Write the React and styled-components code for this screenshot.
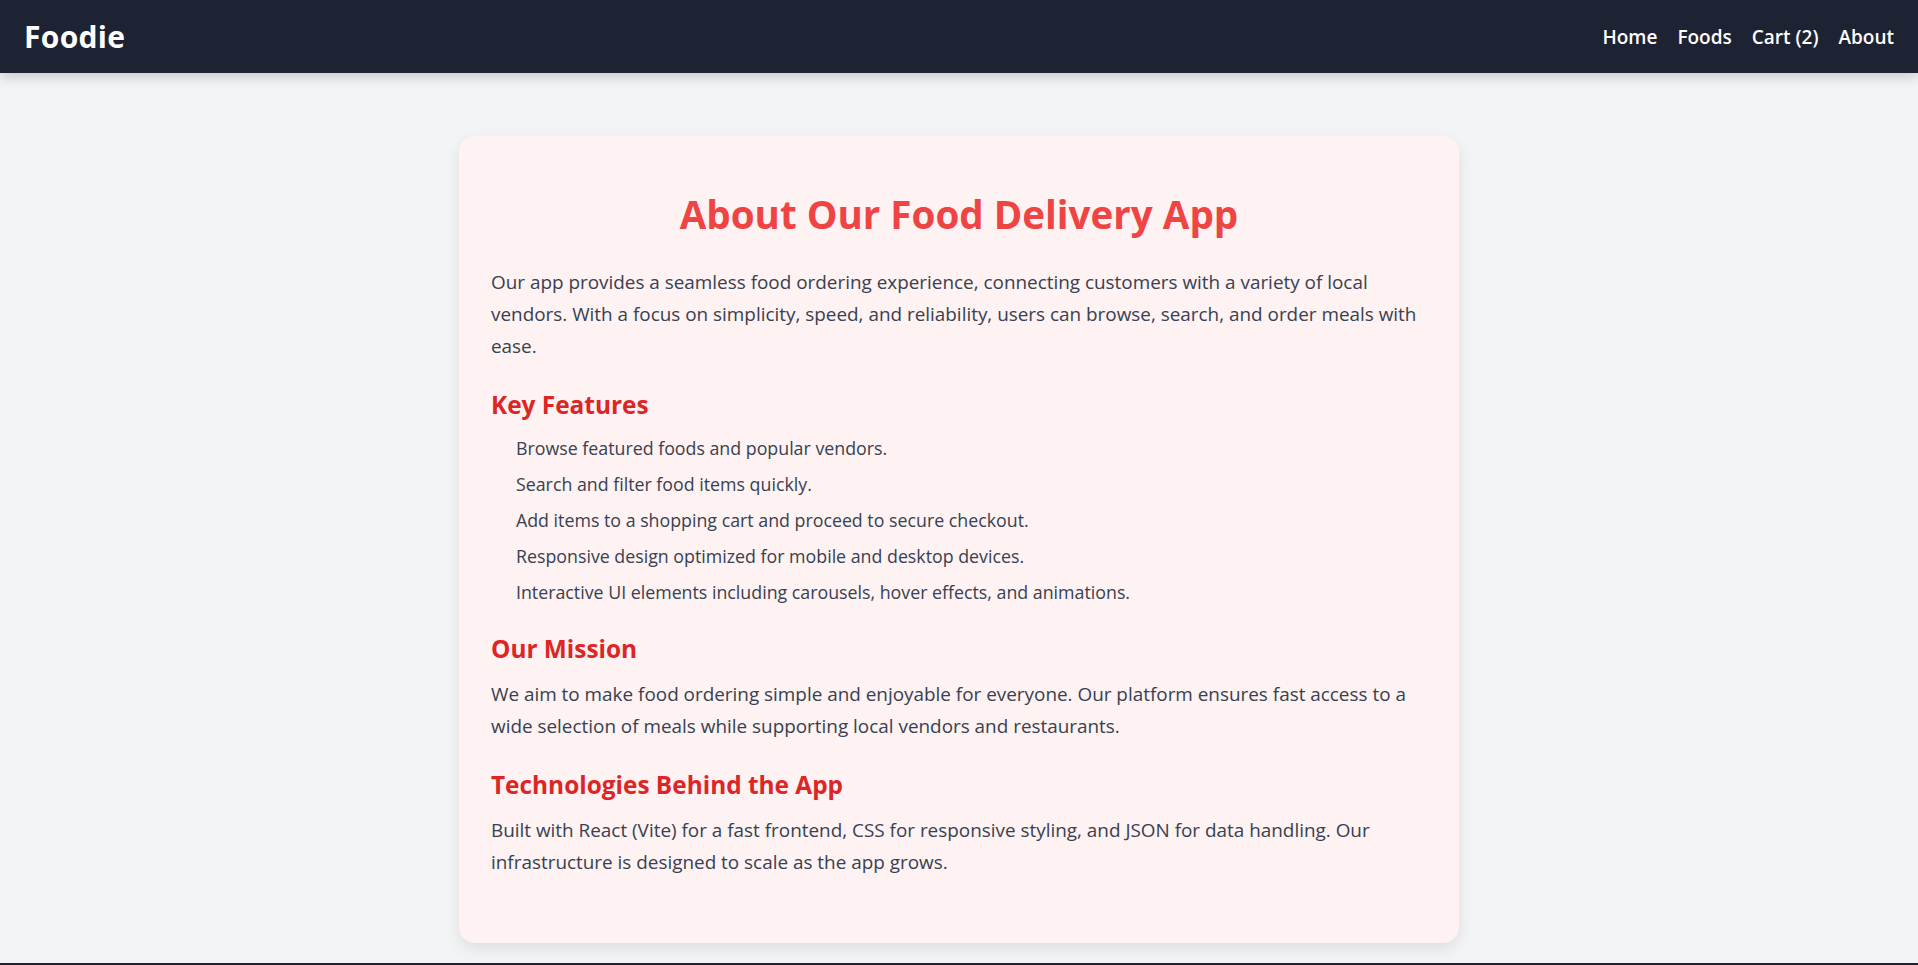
import React from "react";
import styled, { createGlobalStyle } from "styled-components";

const GlobalStyle = createGlobalStyle`
  * {
    box-sizing: border-box;
  }
  body {
    margin: 0;
    background: #f3f4f6;
    font-family: "Open Sans", "Noto Sans", Arial, sans-serif;
    color: #374151;
  }
`;

const features = [
  "Browse featured foods and popular vendors.",
  "Search and filter food items quickly.",
  "Add items to a shopping cart and proceed to secure checkout.",
  "Responsive design optimized for mobile and desktop devices.",
  "Interactive UI elements including carousels, hover effects, and animations.",
];

const App = () => {
  return (
    <>
      <GlobalStyle />
      <Navbar>
        <Logo>Foodie</Logo>
        <NavLinks>
          <NavLink href="#">Home</NavLink>
          <NavLink href="#">Foods</NavLink>
          <NavLink href="#">Cart (2)</NavLink>
          <NavLink href="#">About</NavLink>
        </NavLinks>
      </Navbar>

      <Main>
        <AboutCard>
          <Title>About Our Food Delivery App</Title>
          <Text>
            Our app provides a seamless food ordering experience, connecting
            customers with a variety of local vendors. With a focus on
            simplicity, speed, and reliability, users can browse, search, and
            order meals with ease.
          </Text>

          <SectionTitle>Key Features</SectionTitle>
          <FeatureList>
            {features.map((f) => (
              <li key={f}>{f}</li>
            ))}
          </FeatureList>

          <SectionTitle>Our Mission</SectionTitle>
          <Text>
            We aim to make food ordering simple and enjoyable for everyone. Our
            platform ensures fast access to a wide selection of meals while
            supporting local vendors and restaurants.
          </Text>

          <SectionTitle>Technologies Behind the App</SectionTitle>
          <Text>
            Built with React (Vite) for a fast frontend, CSS for responsive
            styling, and JSON for data handling. Our infrastructure is designed
            to scale as the app grows.
          </Text>
        </AboutCard>
      </Main>

      <Footer />
    </>
  );
};

export default App;

const Navbar = styled.nav`
  height: 73px;
  padding: 0 24px 0 24px;
  background: #1e2333;
  display: flex;
  align-items: center;
  justify-content: space-between;
  box-shadow: 0 4px 12px rgba(0, 0, 0, 0.18);
  position: relative;
  z-index: 2;
`;

const Logo = styled.h1`
  margin: 0;
  color: #ffffff;
  font-size: 30px;
  font-weight: 700;
  letter-spacing: 0.3px;
`;

const NavLinks = styled.div`
  display: flex;
  align-items: center;
  gap: 20px;
`;

const NavLink = styled.a`
  color: #ffffff;
  text-decoration: none;
  font-size: 19px;
  font-weight: 600;
`;

const Main = styled.main`
  padding: 63px 0 20px;
`;

const AboutCard = styled.section`
  max-width: 1000px;
  margin: 0 auto;
  padding: 54px 32px 65px;
  background: #fef2f2;
  border-radius: 16px;
  box-shadow: 0 6px 16px rgba(0, 0, 0, 0.09);
`;

const Title = styled.h2`
  margin: 0 0 28px;
  text-align: center;
  color: #ef4444;
  font-size: 38.6px;
  line-height: 48px;
  font-weight: 700;
`;

const Text = styled.p`
  margin: 0;
  font-size: 18.9px;
  line-height: 32px;
  color: #374151;
`;

const SectionTitle = styled.h3`
  margin: 27px 0 14px;
  color: #dc2626;
  font-size: 24.4px;
  line-height: 31px;
  font-weight: 700;
`;

const FeatureList = styled.ul`
  margin: 0;
  padding: 0 0 0 25px;
  list-style: none;
  display: flex;
  flex-direction: column;
  gap: 8px;

  li {
    font-size: 17.8px;
    line-height: 28px;
  }
`;

const Footer = styled.footer`
  height: 60px;
  background: #1e2333;
`;
